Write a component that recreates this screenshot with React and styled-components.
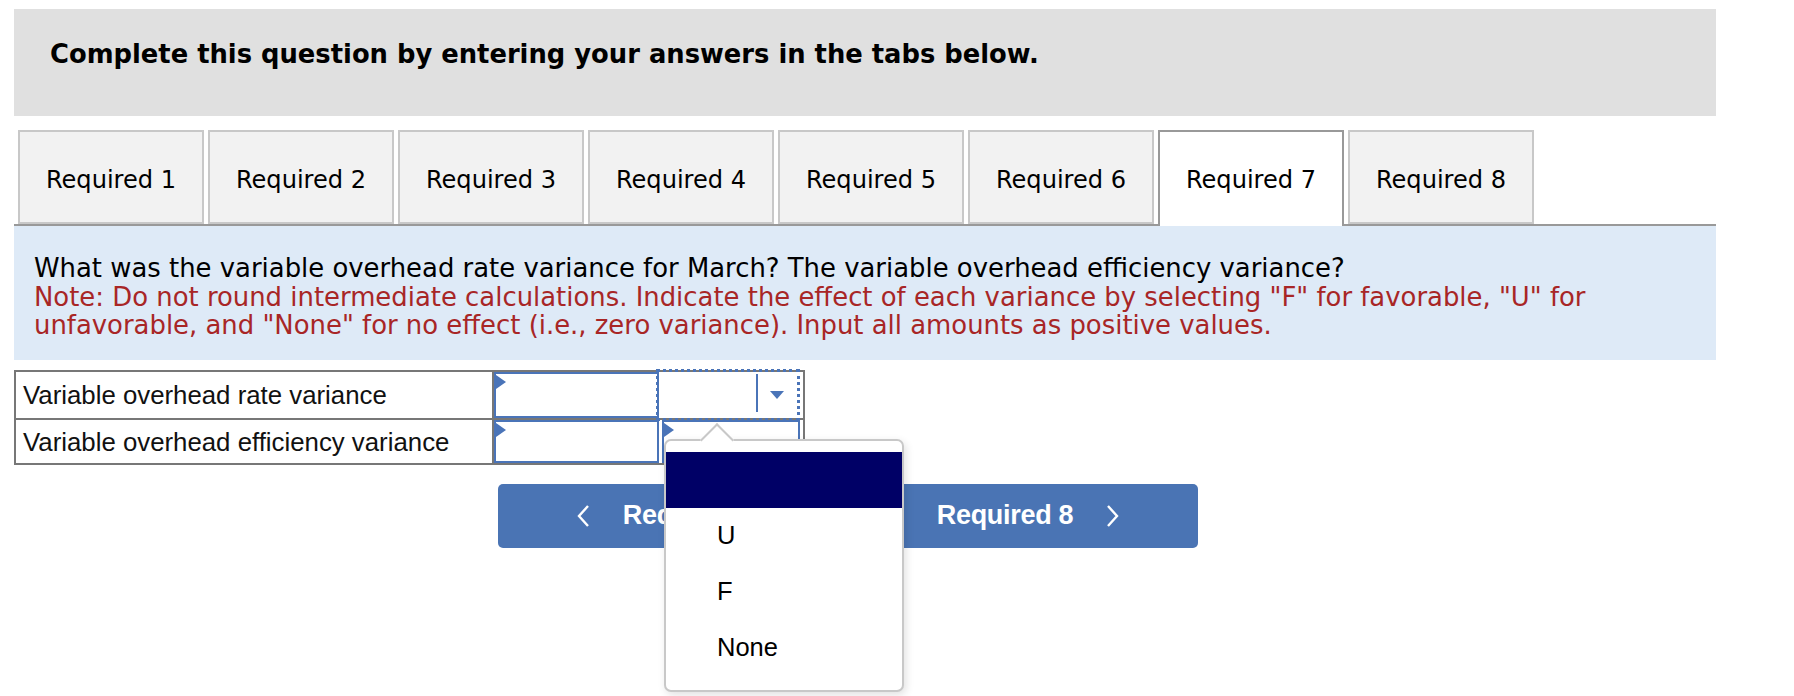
import styled, { createGlobalStyle } from "styled-components";

/* -------------------- STYLES -------------------- */

const Global = createGlobalStyle`
  html, body {
    margin: 0;
    padding: 0;
    background: #fff;
    font-family: "DejaVu Sans", Verdana, sans-serif;
  }
`;

const Page = styled.div`
  width: 1702px;
  padding: 9px 0 0 14px;
  height: 687px;
  overflow: hidden;
`;

const Header = styled.div`
  box-sizing: border-box;
  height: 107px;
  background: #e0e0e0;
  padding: 30px 0 0 36px;
  font-weight: bold;
  font-size: 25.8px;
  line-height: 30px;
  color: #000;
`;

const Tabs = styled.div`
  display: flex;
  gap: 4px;
  margin-top: 14px;
  padding-left: 4px;
  border-bottom: 2px solid #999;
  height: 94px;
`;

const Tab = styled.div`
  box-sizing: border-box;
  width: 186px;
  height: ${({ $active }) => ($active ? "96px" : "94px")};
  background: ${({ $active }) => ($active ? "#fff" : "#f2f2f2")};
  border: 2px solid ${({ $active }) => ($active ? "#999" : "#c8c8c8")};
  border-bottom: ${({ $active }) => ($active ? "none" : "2px solid #c8c8c8")};
  display: flex;
  align-items: center;
  justify-content: center;
  padding-top: ${({ $active }) => ($active ? "1px" : "5px")};
  font-size: 24.1px;
  color: #000;
  position: relative;
  z-index: 1;
`;

const InfoBox = styled.div`
  background: #deeaf7;
  padding: 28px 22px 20px 20px;
  font-size: 25.9px;
  line-height: 28.6px;
`;

const Question = styled.div`
  color: #000;
`;

const Note = styled.div`
  color: #a82626;
`;

const Table = styled.div`
  margin-top: 10px;
  width: 787px;
  border: 2px solid #777;
  font-family: "Liberation Sans", Arial, sans-serif;
`;

const Row = styled.div`
  display: flex;
  height: ${({ $h }) => $h}px;
  border-top: ${({ $first }) => ($first ? "none" : "2px solid #777")};
`;

const LabelCell = styled.div`
  width: 478px;
  border-right: 2px solid #777;
  display: flex;
  align-items: center;
  padding: 2px 0 0 7px;
  box-sizing: border-box;
  font-size: 25.8px;
  color: #111;
`;

const InputCell = styled.div`
  position: relative;
  box-sizing: border-box;
  width: 165px;
  border: 2px solid #4a74b8;
`;

const Flag = styled.span`
  position: absolute;
  top: 1px;
  left: 0;
  width: 0;
  height: 0;
  border-top: 7px solid transparent;
  border-bottom: 7px solid transparent;
  border-left: 10px solid #4a74b8;
`;

const SelectCell = styled.div`
  position: relative;
  box-sizing: border-box;
  width: 138px;
  margin-left: ${({ $focused }) => ($focused ? "0" : "3px")};
  display: flex;
  justify-content: flex-end;
  border: ${({ $focused }) => ($focused ? "none" : "2px solid #4a74b8")};
  outline: ${({ $focused }) => ($focused ? "3px dotted #4a74b8" : "none")};
  outline-offset: 0;
`;

const ArrowBox = styled.div`
  width: 37px;
  margin: 2px 2px 6px 0;
  border-left: 2px solid #4a74b8;
  display: flex;
  align-items: center;
  justify-content: center;
  padding-top: 4px;
`;

const Caret = styled.span`
  width: 0;
  height: 0;
  border-left: 7px solid transparent;
  border-right: 7px solid transparent;
  border-top: 8px solid #4a74b8;
`;

const Popover = styled.div`
  position: absolute;
  top: 17px;
  left: 0;
  width: 240px;
  box-sizing: border-box;
  padding: 11px 0 14px;
  background: #fff;
  border: 2px solid #c8c8c8;
  border-radius: 7px;
  box-shadow: 2px 3px 8px rgba(0, 0, 0, 0.12);
  z-index: 5;

  &::before {
    content: "";
    position: absolute;
    top: -13px;
    left: 39px;
    width: 22px;
    height: 22px;
    background: #fff;
    border-top: 2px solid #c8c8c8;
    border-left: 2px solid #c8c8c8;
    transform: rotate(45deg);
  }
`;

const Option = styled.div`
  position: relative;
  height: 56px;
  display: flex;
  align-items: center;
  padding-left: 51px;
  font-size: 25.5px;
  color: #000;
  background: ${({ $selected }) => ($selected ? "#000066" : "transparent")};
`;

const Nav = styled.div`
  display: flex;
  gap: 20px;
  margin-top: 19px;
  padding-left: 484px;
`;

const NavBtn = styled.button`
  width: 340px;
  height: 64px;
  border: none;
  border-radius: 5px;
  background: #4a74b4;
  color: #fff;
  display: flex;
  align-items: center;
  justify-content: center;
  gap: 33px;
  font-family: "Liberation Sans", Arial, sans-serif;
  font-weight: bold;
  font-size: 27px;
  letter-spacing: -0.3px;
  cursor: pointer;
`;

const Chevron = ({ dir }) => (
  <svg width="13" height="24" viewBox="0 0 13 24">
    <polyline
      points={dir === "left" ? "11,2 2,12 11,22" : "2,2 11,12 2,22"}
      fill="none"
      stroke="#fff"
      strokeWidth="2.4"
    />
  </svg>
);

export default function App() {
  const tabs = [1, 2, 3, 4, 5, 6, 7, 8];

  return (
    <Page>
      <Global />
      <Header>Complete this question by entering your answers in the tabs below.</Header>

      {/* Tabs */}
      <Tabs>
        {tabs.map((n) => (
          <Tab key={n} $active={n === 7}>
            Required {n}
          </Tab>
        ))}
      </Tabs>

      {/* Instructions */}
      <InfoBox>
        <Question>
          What was the variable overhead rate variance for March? The variable overhead efficiency variance?
        </Question>
        <Note>
          Note: Do not round intermediate calculations. Indicate the effect of each variance by selecting "F" for
          favorable, "U" for unfavorable, and "None" for no effect (i.e., zero variance). Input all amounts as
          positive values.
        </Note>
      </InfoBox>

      {/* Answer table */}
      <Table>
        <Row $first $h={46}>
          <LabelCell>Variable overhead rate variance</LabelCell>
          <InputCell>
            <Flag />
          </InputCell>
          <SelectCell $focused>
            <ArrowBox>
              <Caret />
            </ArrowBox>
          </SelectCell>
        </Row>
        <Row $h={43}>
          <LabelCell>Variable overhead efficiency variance</LabelCell>
          <InputCell>
            <Flag />
          </InputCell>
          <SelectCell>
            <Flag />
            <Popover>
              <Option $selected />
              <Option>U</Option>
              <Option>F</Option>
              <Option>None</Option>
            </Popover>
          </SelectCell>
        </Row>
      </Table>

      {/* Prev / Next */}
      <Nav>
        <NavBtn>
          <Chevron dir="left" />
          <span>Required 6</span>
        </NavBtn>
        <NavBtn>
          <span>Required 8</span>
          <Chevron dir="right" />
        </NavBtn>
      </Nav>
    </Page>
  );
}
